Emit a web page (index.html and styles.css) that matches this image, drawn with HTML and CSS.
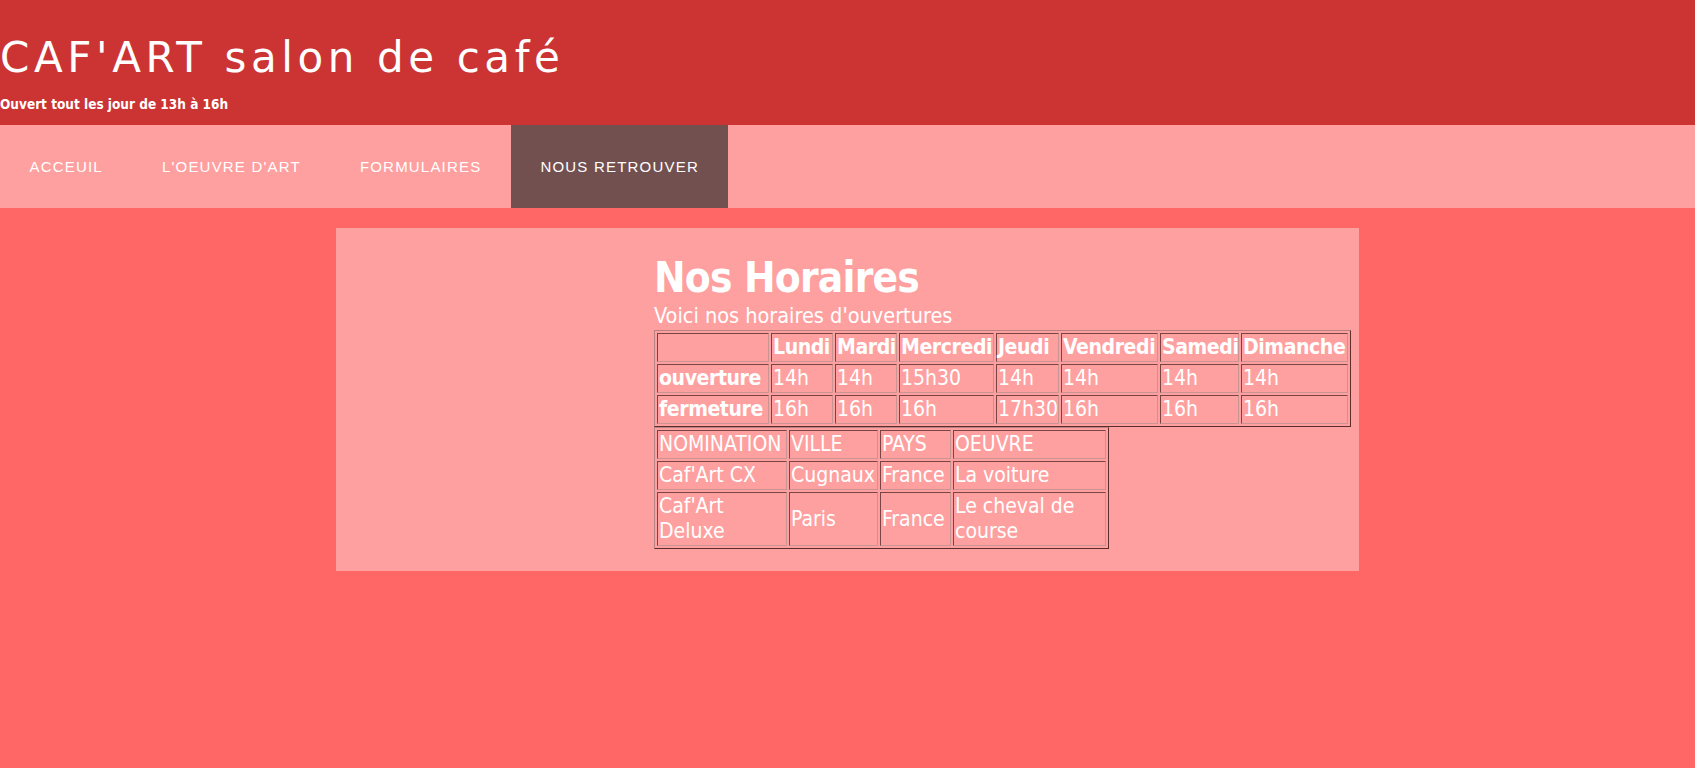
FILE: index.html
```html
<!DOCTYPE html>
<html lang="fr">
<head>
<meta charset="utf-8">
<title>CAF'ART salon de café</title>
<link rel="stylesheet" href="styles.css">
</head>
<body>
<header class="site-header">
  <h1 class="site-title">CAF'ART salon de café</h1>
  <p class="site-tagline">Ouvert tout les jour de 13h à 16h</p>
</header>
<nav class="site-nav">
  <a class="nav-item" href="#">Acceuil</a>
  <a class="nav-item" href="#">L'oeuvre d'art</a>
  <a class="nav-item" href="#">Formulaires</a>
  <a class="nav-item active" href="#">Nous retrouver</a>
</nav>
<main class="content">
  <section class="panel">
    <div class="panel-body">
      <h2 class="panel-title">Nos Horaires</h2>
      <p class="panel-intro">Voici nos horaires d'ouvertures</p>
      <table class="grid hours">
        <colgroup>
          <col class="h0"><col class="h1"><col class="h2"><col class="h3"><col class="h4"><col class="h5"><col class="h6"><col class="h7">
        </colgroup>
        <tr>
          <th></th><th>Lundi</th><th>Mardi</th><th>Mercredi</th><th>Jeudi</th><th>Vendredi</th><th>Samedi</th><th>Dimanche</th>
        </tr>
        <tr>
          <th>ouverture</th><td>14h</td><td>14h</td><td>15h30</td><td>14h</td><td>14h</td><td>14h</td><td>14h</td>
        </tr>
        <tr>
          <th>fermeture</th><td>16h</td><td>16h</td><td>16h</td><td>17h30</td><td>16h</td><td>16h</td><td>16h</td>
        </tr>
      </table>
      <table class="grid places">
        <colgroup>
          <col class="p0"><col class="p1"><col class="p2"><col class="p3">
        </colgroup>
        <tr><td>NOMINATION</td><td>VILLE</td><td>PAYS</td><td>OEUVRE</td></tr>
        <tr><td>Caf'Art CX</td><td>Cugnaux</td><td>France</td><td>La voiture</td></tr>
        <tr><td>Caf'Art Deluxe</td><td>Paris</td><td>France</td><td>Le cheval de course</td></tr>
      </table>
    </div>
  </section>
</main>
</body>
</html>
```
FILE: styles.css
```css
html, body {
  margin: 0;
  padding: 0;
}
body {
  background: #ff6666;
  min-height: 768px;
  font-family: "DejaVu Sans Condensed", "DejaVu Sans", sans-serif;
  color: #ffffff;
}
.site-header {
  background: #cc3333;
  height: 125px;
  box-sizing: border-box;
  padding-top: 33px;
  color: #ffffff;
}
.site-title {
  margin: 0;
  font-family: "DejaVu Sans", sans-serif;
  font-weight: normal;
  font-size: 42px;
  line-height: 50px;
  letter-spacing: 4.6px;
}
.site-tagline {
  margin: 11px 0 0;
  font-family: "DejaVu Sans Condensed", "DejaVu Sans", sans-serif;
  font-weight: bold;
  font-size: 13.5px;
  line-height: 20px;
}
.site-nav {
  display: flex;
  height: 83px;
  background: #ffa0a0;
}
.nav-item {
  display: block;
  padding: 0 29.5px;
  line-height: 83px;
  font-family: "Liberation Sans", Arial, sans-serif;
  font-size: 15px;
  letter-spacing: 1.2px;
  text-transform: uppercase;
  text-decoration: none;
  color: #ffffff;
}
.nav-item.active {
  background: #735050;
}
.content {
  padding-top: 20px;
}
.panel {
  width: 1023px;
  margin: 0 auto;
  box-sizing: border-box;
  padding: 25px 0 22px 318px;
  background: #ffa0a0;
}
.panel-title {
  margin: 0;
  font-size: 42px;
  line-height: 50px;
  font-weight: bold;
  letter-spacing: -0.8px;
}
.panel-intro {
  margin: 0;
  font-size: 21.5px;
  line-height: 26px;
}
.grid {
  table-layout: fixed;
  border-collapse: separate;
  border-spacing: 2px;
  border: 1px solid;
  border-color: #b88282 #5e2c2c #5e2c2c #b88282;
  font-size: 21px;
  line-height: 25px;
  color: #ffffff;
}
.grid th,
.grid td {
  border: 1px solid;
  border-color: #7a4444 #c89494 #c89494 #7a4444;
  padding: 1px;
  text-align: left;
  vertical-align: middle;
  white-space: normal;
  overflow: visible;
}
.grid th {
  font-weight: bold;
  letter-spacing: -0.4px;
}
.hours {
  width: 697px;
  margin-top: 1px;
}
.places {
  width: 455px;
}
.h0 { width: 112px; }
.h1 { width: 62px; }
.h2 { width: 62px; }
.h3 { width: 95px; }
.h4 { width: 63px; }
.h5 { width: 97px; }
.h6 { width: 79px; }
.h7 { width: 107px; }
.p0 { width: 130px; }
.p1 { width: 89px; }
.p2 { width: 71px; }
.p3 { width: 153px; }
```
